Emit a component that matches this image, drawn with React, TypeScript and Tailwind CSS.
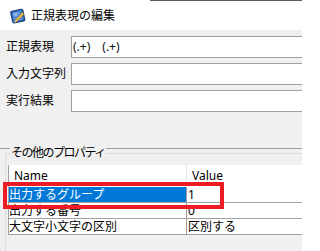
const font = "font-['Noto_Sans','Noto_Sans_CJK_JP',sans-serif]"

function TitleIcon() {
  return (
    <svg width="16" height="16" viewBox="0 0 16 16">
      <g transform="rotate(-12 8 8)">
        <rect x="1.5" y="2" width="12.5" height="12" rx="1.5" fill="#2f63b0" stroke="#1d3f7a" />
        <rect x="3" y="3.5" width="9.5" height="9" rx="1" fill="#5b8fd6" />
        <rect x="4" y="4.5" width="4" height="3" fill="#8fb7ea" />
      </g>
      <path d="M5 12.5 L12.5 4.5 L14 6 L6.5 14 Z" fill="#f4c542" stroke="#9a6a12" strokeWidth="0.6" />
      <path d="M5 12.5 L4.3 14.6 L6.5 14 Z" fill="#f6e2b5" />
    </svg>
  )
}

function Field({ label, value }: { label: string; value?: string }) {
  return (
    <div className="flex h-[22px] items-center">
      <div className="w-[71px] shrink-0 pl-[6px] text-[12px] leading-none text-black">{label}</div>
      <div className="flex h-[22px] w-[260px] shrink-0 items-center border border-[#a0a0a0] bg-white pl-[1px] text-[12px] leading-none text-[#111]">
        {value}
      </div>
    </div>
  )
}

function Row({
  name,
  value,
  selected,
}: {
  name: string
  value: string
  selected?: boolean
}) {
  return (
    <div className="flex h-[16px] border-b border-[#a0a0a0]">
      <div
        className={`flex w-[178px] shrink-0 items-center border-r border-[#a0a0a0] text-[12px] leading-none ${
          selected ? 'bg-[#0078d7] text-white' : 'text-black'
        }`}
      >
        {name}
      </div>
      <div className="flex flex-1 items-center pl-[1px] text-[12px] leading-none text-black">{value}</div>
    </div>
  )
}

export default function App() {
  return (
    <div className={`relative h-[251px] w-[302px] overflow-hidden bg-[#f0f0f0] ${font}`}>
      {/* title bar */}
      <div className="flex h-[30px] flex-col bg-white">
        <div className="ml-[150px] h-px bg-[#5a5a5a]" />
        <div className="flex flex-1 items-center gap-[5px] pl-[10px]">
          <TitleIcon />
          <span className="text-[12px] leading-none text-black">正規表現の編集</span>
        </div>
      </div>

      {/* fields */}
      <div className="flex flex-col gap-[5px] pt-[6px]">
        <Field label="正規表現" value="(.+)　(.+)" />
        <Field label="入力文字列" />
        <Field label="実行結果" />
      </div>

      {/* splitter */}
      <div className="mt-[36px] h-px bg-[#a0a0a0]" />

      {/* group box */}
      <div className="relative ml-[5px] mt-[4px] border-l border-t border-[#dcdcdc] pl-[2px] pt-[11px]">
        <span className="absolute left-[4px] top-[-7px] bg-[#f0f0f0] px-px text-[12px] leading-none tracking-[-1.5px] text-black">
          その他のプロパティ
        </span>
        <div className="w-[320px] border-l border-[#a0a0a0] bg-white">
          <div className="flex h-[22px]">
            <div className="flex w-[178px] shrink-0 items-center border-r border-[#e5e5e5] pl-[5px] text-[12px] leading-none text-black">
              Name
            </div>
            <div className="flex flex-1 items-center pl-[5px] text-[12px] leading-none text-black">Value</div>
          </div>
          <Row name="出力するグループ" value="1" selected />
          <Row name="出力する番号" value="0" />
          <Row name="大文字小文字の区別" value="区別する" />
        </div>
        <div className="h-[20px]" />
      </div>

      {/* red highlight */}
      <div className="absolute left-[3px] top-[182px] h-[27px] w-[221px] border-4 border-[#ed1c24]" />
    </div>
  )
}
